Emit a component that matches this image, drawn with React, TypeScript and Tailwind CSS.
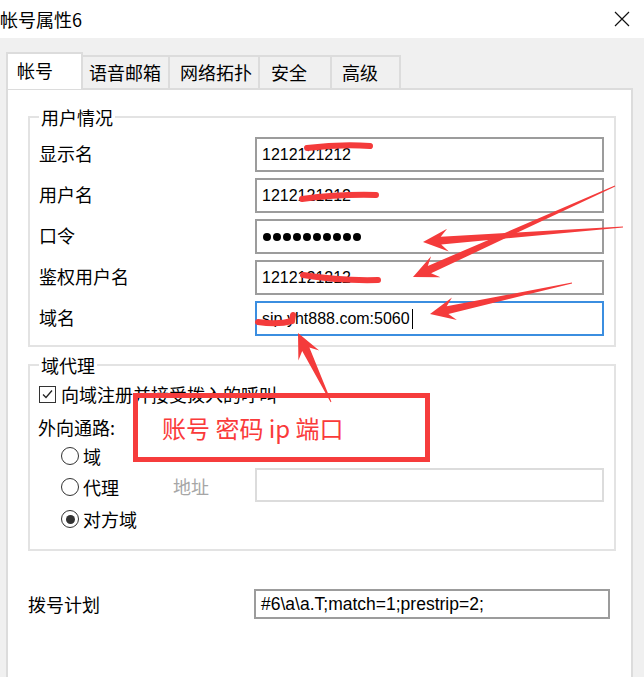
import React from "react";

type Pt = [number, number];

// red callout arrows drawn on top of the dialog
const arrows: { tail: Pt; tip: Pt }[] = [
  { tail: [615, 186], tip: [413, 277] },
  { tail: [623, 227], tip: [423, 242] },
  { tail: [572, 283], tip: [430, 314] },
  { tail: [331, 402], tip: [298, 333] },
];

function arrowPoints(tail: Pt, tip: Pt, head = 25, hw = 23, sw = 8) {
  const dx = tail[0] - tip[0];
  const dy = tail[1] - tip[1];
  const len = Math.hypot(dx, dy);
  const ux = dx / len;
  const uy = dy / len;
  const nx = -uy;
  const ny = ux;
  const back: Pt = [tip[0] + ux * head, tip[1] + uy * head];
  const neck: Pt = [tip[0] + ux * head * 0.72, tip[1] + uy * head * 0.72];
  const pts: Pt[] = [
    [tail[0] + nx * 0.4, tail[1] + ny * 0.4],
    [neck[0] + (nx * sw) / 2, neck[1] + (ny * sw) / 2],
    [back[0] + (nx * hw) / 2, back[1] + (ny * hw) / 2],
    tip,
    [back[0] - (nx * hw) / 2, back[1] - (ny * hw) / 2],
    [neck[0] - (nx * sw) / 2, neck[1] - (ny * sw) / 2],
    [tail[0] - nx * 0.4, tail[1] - ny * 0.4],
  ];
  return pts.map((p) => `${p[0].toFixed(1)},${p[1].toFixed(1)}`).join(" ");
}

function TextBox({
  children,
  focus,
  disabled,
  w = "w-[349px]",
  h = "h-[35px]",
}: {
  children?: React.ReactNode;
  focus?: boolean;
  disabled?: boolean;
  w?: string;
  h?: string;
}) {
  const border = focus
    ? "border-[#3b8ee0]"
    : disabled
    ? "border-[#dcdcdc]"
    : "border-[#9c9c9c]";
  return (
    <div
      className={`${w} ${h} border-2 ${border} bg-white flex items-center pl-[5px] font-['Liberation_Sans',sans-serif] text-[16px] text-black`}
    >
      {children}
    </div>
  );
}

function Row({ label, children }: { label: string; children: React.ReactNode }) {
  return (
    <div className="flex items-center">
      <span className="w-[225px] pl-[9px] pb-[4px] text-[18px] leading-[24px]">{label}</span>
      {children}
    </div>
  );
}

function Radio({ checked, label }: { checked?: boolean; label: string }) {
  return (
    <div className="flex items-center h-[22px]">
      <span className="w-[18px] h-[18px] rounded-full border border-[#333] bg-white flex items-center justify-center">
        {checked && <span className="w-[9px] h-[9px] rounded-full bg-[#333]" />}
      </span>
      <span className="ml-[4px] text-[18px] leading-[22px]">{label}</span>
    </div>
  );
}

export default function App() {
  const tabs = [
    { name: "语音邮箱", w: "w-[87px]", pl: "pl-[6px]" },
    { name: "网络拓扑", w: "w-[90px]", pl: "pl-[10px]" },
    { name: "安全", w: "w-[72px]", pl: "pl-[11px]" },
    { name: "高级", w: "w-[69px]", pl: "pl-[10px]" },
  ];

  return (
    <div className="relative w-[644px] h-[677px] overflow-hidden bg-[#f0f0f0] text-black font-['Noto_Sans_CJK_SC','Noto_Sans',sans-serif]">
      {/* title bar */}
      <div className="h-[38px] bg-white flex items-center justify-between">
        <span className="text-[18px] leading-[24px]">帐号属性6</span>
        <svg className="mr-[14px]" width="16" height="16" viewBox="0 0 16 16">
          <path d="M1 1 L15 15 M15 1 L1 15" stroke="#111" strokeWidth="1.2" fill="none" />
        </svg>
      </div>

      {/* tab strip */}
      <div className="flex items-end h-[50px] pl-[6px]">
        <div className="relative z-10 w-[77px] h-[37px] -mb-[1px] bg-white border-l-2 border-t-2 border-r-2 border-[#dcdcdc] pl-[9px] pt-[4px] text-[18px] leading-[24px]">
          帐号
        </div>
        {tabs.map((t) => (
          <div
            key={t.name}
            className={`${t.w} h-[33px] bg-[#f0f0f0] border-t-2 border-r-2 border-[#dcdcdc] ${t.pl} pt-[3px] text-[18px] leading-[24px]`}
          >
            {t.name}
          </div>
        ))}
      </div>

      {/* tab page */}
      <div className="w-[627px] h-[600px] ml-[6px] bg-white border-2 border-[#dcdcdc]">
        <fieldset className="ml-[20px] mt-[15px] w-[588px] border-2 border-[#e3e3e3] pt-[8px] pb-[9px]">
          <legend className="ml-[9px] px-[2px] text-[18px] leading-[24px]">用户情况</legend>
          <div className="flex flex-col gap-[6px]">
            <Row label="显示名">
              <TextBox>1212121212</TextBox>
            </Row>
            <Row label="用户名">
              <TextBox>1212121212</TextBox>
            </Row>
            <Row label="口令">
              <TextBox>
                <div className="flex gap-[2px] pl-[1px]">
                  {Array.from({ length: 10 }).map((_, i) => (
                    <span key={i} className="w-[8px] h-[8px] rounded-full bg-black" />
                  ))}
                </div>
              </TextBox>
            </Row>
            <Row label="鉴权用户名">
              <TextBox>1212121212</TextBox>
            </Row>
            <Row label="域名">
              <TextBox focus>
                sip.yht888.com:5060
                <span className="ml-[2px] w-[1px] h-[20px] bg-black" />
              </TextBox>
            </Row>
          </div>
        </fieldset>

        <fieldset className="ml-[20px] mt-[6px] w-[588px] border-2 border-[#e3e3e3] pt-[6px] pb-[19px]">
          <legend className="ml-[9px] px-[2px] text-[18px] leading-[24px]">域代理</legend>
          <div className="flex items-center h-[22px] pl-[9px]">
            <span className="w-[17px] h-[17px] border border-[#333] bg-white flex items-center justify-center">
              <svg width="13" height="13" viewBox="0 0 13 13">
                <path d="M2 6.5 L5 9.5 L11 2.5" stroke="#222" strokeWidth="1.3" fill="none" />
              </svg>
            </span>
            <span className="ml-[5px] text-[18px] leading-[22px]">向域注册并接受拨入的呼叫</span>
          </div>
          <div className="mt-[11px] h-[22px] pl-[8px] text-[18px] leading-[22px]">外向通路:</div>
          <div className="mt-[7px] pl-[31px]">
            <Radio label="域" />
          </div>
          <div className="mt-[1px] flex items-center pl-[31px]">
            <div className="w-[112px] pt-[3px]">
              <Radio label="代理" />
            </div>
            <span className="w-[82px] pt-[1px] text-[18px] leading-[22px] text-[#a6a6a6]">地址</span>
            <TextBox disabled h="h-[34px]" />
          </div>
          <div className="mt-[6px] pl-[31px]">
            <Radio checked label="对方域" />
          </div>
        </fieldset>

        <div className="mt-[38px] flex items-center ml-[20px]">
          <span className="w-[226px] text-[18px] leading-[24px]">拨号计划</span>
          <TextBox w="w-[356px]" h="h-[30px]">
            <span className="text-[17.5px]">#6\a\a.T;match=1;prestrip=2;</span>
          </TextBox>
        </div>
      </div>

      {/* red callout box */}
      <div className="absolute left-[133px] top-[393px] w-[297px] h-[69px] border-[5px] border-[#f63c3c] flex items-center pl-[24px]">
        <span className="text-[24px] leading-[30px] text-[#fa3a3a] whitespace-pre">账号 密码 ip 端口</span>
      </div>

      {/* arrows and strike marks */}
      <svg className="absolute inset-0 pointer-events-none" width="644" height="677" viewBox="0 0 644 677">
        <g stroke="#f43b3b" strokeWidth="6" strokeLinecap="round" fill="none">
          <path d="M307 148 Q340 144 370 146" />
          <path d="M302 199 Q340 194 376 195" />
          <path d="M303 275 Q340 281 378 280" />
          <path d="M258 322 Q278 325 292 321 L293 315" />
        </g>
        {arrows.map((a, i) => (
          <polygon key={i} points={arrowPoints(a.tail, a.tip)} fill="#f43b3b" />
        ))}
      </svg>
    </div>
  );
}
